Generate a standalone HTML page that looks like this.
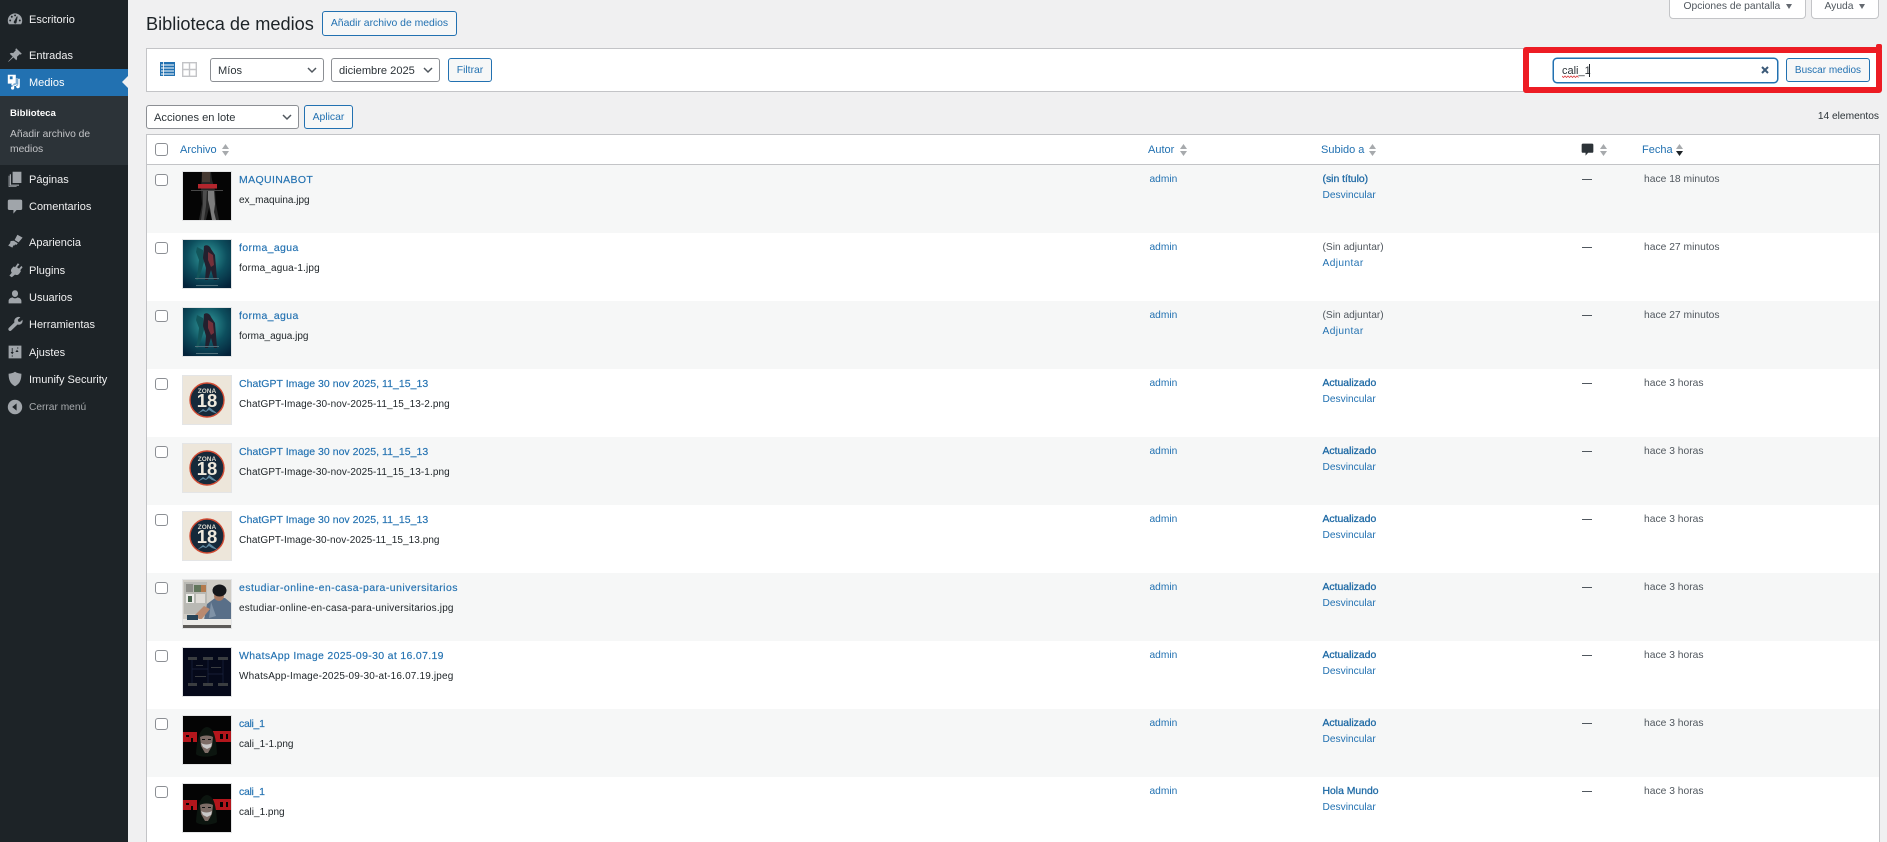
<!DOCTYPE html>
<html lang="es">
<head>
<meta charset="utf-8">
<title>Biblioteca de medios</title>
<style>
html,body{margin:0;padding:0;width:1887px;height:842px;overflow:hidden;background:#f0f0f1;font-family:"Liberation Sans",sans-serif;color:#2c3338}
#page{position:relative;width:1887px;height:842px;overflow:hidden;background:#f0f0f1}
.a,.t{position:absolute;white-space:nowrap}
.t{height:16px;line-height:16px}
.box{position:absolute;box-sizing:border-box}
#side{left:0;top:0;width:128px;height:842px;background:#1d2327}
.m{left:29px;font-size:11px;color:#f0f0f1}
.ic{position:absolute;left:7px;width:16px;height:16px;fill:#a0a5aa}
.btn{position:absolute;box-sizing:border-box;border:1px solid #2271b1;border-radius:3px;background:#f6f7f7;color:#2271b1;text-align:center;white-space:nowrap}
.sel{position:absolute;box-sizing:border-box;border:1px solid #8c8f94;border-radius:3px;background:#fff;color:#2c3338;font-size:11.1px;white-space:nowrap}
.sel span{position:absolute;left:7px;top:0;line-height:24px}
.sel svg{position:absolute;top:7px;right:6px;width:10px;height:8px}
.cb{position:absolute;left:155px;width:13px;height:13px;box-sizing:border-box;border:1px solid #8c8f94;border-radius:3px;background:#fff}
.row{position:absolute;left:147px;width:1732px;height:68px}
.odd{background:#f6f7f7}
.even{background:#fff}
.row .cb{left:8px;top:9px;height:12px}
.th{position:absolute;left:35px;top:6px;width:50px;height:50px;box-sizing:border-box;border:1px solid #e4e5e6;overflow:hidden}
.th svg{display:block;width:48px;height:48px}
.ti{left:92px;top:6.500px;font-size:10.5px;color:#2271b1;-webkit-text-stroke:.15px #2271b1}
.fn{left:92px;top:28px;font-size:10px;color:#1d2327}
.au{left:1002.5px;top:7px;font-size:10.2px;color:#2271b1}
.up{left:1175.5px;top:7px;font-size:10.2px;color:#50575e}
.upb{color:#1f6aa5;font-size:10.4px;-webkit-text-stroke:.3px #1f6aa5}
.ac{left:1175.5px;top:23px;font-size:10.2px;color:#2271b1}
.da{left:1435px;top:14px;width:10px;height:1px;background:#50575e}
.dt{left:1497px;top:7px;font-size:10.3px;color:#50575e}
.hd{font-size:11px;color:#2271b1;top:142px}
.sort{position:absolute;width:7px;height:12px}
</style>
</head>
<body>
<div id="page">
<svg width="0" height="0" style="position:absolute">
<defs>
<symbol id="sortg" viewBox="0 0 7 12"><path d="M3.5 0 7 5H0z" fill="#a7aaad"/><path d="M3.5 12 7 7H0z" fill="#a7aaad"/></symbol>
<symbol id="sortb" viewBox="0 0 7 12"><path d="M3.5 0 7 5H0z" fill="#a7aaad"/><path d="M3.5 12 7 7H0z" fill="#1d2327"/></symbol>
<symbol id="chev" viewBox="0 0 10 8"><path d="M1 2l4 4 4-4" fill="none" stroke="#50575e" stroke-width="1.5"/></symbol>
<symbol id="machina" viewBox="0 0 48 48"><rect width="48" height="48" fill="#050505"/><path d="M19 0h9l1 8 3 10 1 14 3 16H29l-3-12-3 12h-7l3-16-1-15z" fill="#262626"/><path d="M25 18h6l1 14-1 8 2 8h-4l-2-12-2-8z" fill="#7d7d7d"/><path d="M20 18h4l-1 16-2 14h-3l2-16z" fill="#4c4c4c"/><path d="M19 0h8v10h-8z" fill="#463a32"/><rect x="15" y="12" width="19" height="4.500" fill="#b3262d"/><rect x="8" y="18" width="32" height="1" fill="#484848"/></symbol>
<symbol id="agua" viewBox="0 0 48 48"><defs><radialGradient id="ag" cx=".5" cy=".35" r=".75"><stop offset="0" stop-color="#35a0a0"/><stop offset=".55" stop-color="#0d4f5e"/><stop offset="1" stop-color="#04233a"/></radialGradient></defs><rect width="48" height="48" fill="url(#ag)"/><path d="M14 7l6 3 1 12-3 10-3 8h-2l2-10 1-10-3-8z" fill="#12555a"/><path d="M21 6c3-2 6 0 7 3l4 6 1 12 1 13h-3l-3-10-3 10h-3l1-12-3-10z" fill="#23202e"/><path d="M25 12l5 3 1 10-3 2-3-7z" fill="#74303a"/><rect x="12" y="38" width="24" height="1" fill="#4e6f7a"/><rect x="13" y="45" width="22" height="1" fill="#4e6f7a"/></symbol>
<symbol id="zona" viewBox="0 0 48 48"><rect width="48" height="48" fill="#ede6da"/><circle cx="24" cy="24" r="17" fill="#16293a" stroke="#d04a32" stroke-width="1.400"/><text x="24" y="17" text-anchor="middle" font-family="Liberation Sans,sans-serif" font-size="6.500" font-weight="bold" fill="#d9d6cc">ZONA</text><text x="24" y="31" text-anchor="middle" font-family="Liberation Sans,sans-serif" font-size="18.500" font-weight="bold" fill="#efe9dd">18</text><path d="M14 38l6-5 3 2 3-4 9 7-6-2-3-2-3 2-3-1z" fill="#5f88a0"/></symbol>
<symbol id="study" viewBox="0 0 48 48"><rect width="48" height="48" fill="#d0cdc6"/><rect x="1" y="2" width="23" height="32" fill="#b9b9b4"/><rect x="3" y="4" width="7" height="8" fill="#8d8d88"/><rect x="11" y="5" width="9" height="7" fill="#62765c"/><rect x="18" y="5" width="5" height="7" fill="#b37a4d"/><rect x="3" y="14" width="8" height="9" fill="#edecea"/><rect x="5" y="16" width="4" height="6" fill="#45604a"/><rect x="13" y="14" width="9" height="9" fill="#dfdcd7"/><path d="M21 40l3-16 8-6 10 0 6 5v17z" fill="#596f88"/><path d="M28 22l5 14-7 2z" fill="#7f92a6"/><ellipse cx="36" cy="16" rx="5" ry="5" fill="#a97a62"/><ellipse cx="36.500" cy="10.500" rx="7" ry="6" fill="#15171b"/><path d="M11 36l10-10 6 3-9 11z" fill="#b98a70"/><rect y="39" width="48" height="6" fill="#ecebe8"/><rect x="4" y="35" width="11" height="5" fill="#274458"/><rect y="45" width="48" height="3" fill="#5c5a57"/></symbol>
<symbol id="whats" viewBox="0 0 48 48"><rect width="48" height="48" fill="#05091a"/><g fill="#3a3d40"><rect x="5" y="9" width="9" height="3"/><rect x="20" y="9" width="10" height="3"/><rect x="35" y="9" width="10" height="3"/><rect x="5" y="35" width="9" height="3"/><rect x="20" y="35" width="10" height="3"/><rect x="35" y="35" width="10" height="3"/><rect x="12" y="28" width="11" height="1"/><rect x="28" y="19" width="10" height="1"/><rect x="13" y="17" width="7" height="1"/></g><path d="M9 12v23M25 12v23M40 12v23M9 21h16M25 26h15" stroke="#1c2540" stroke-width=".7" fill="none"/></symbol>
<symbol id="cali" viewBox="0 0 48 48"><rect width="48" height="48" fill="#040404"/><path d="M0 16h14v10H0zM30 15h18v11H30z" fill="#b3161c"/><path d="M3 19h3v2H3zM8 22h2v4H8zM37 18h3v5h-3zM43 18h2v5h-2z" fill="#040404"/><path d="M13 38c1-16 4-26 11-27 7 1 9 10 10 27-3 3-18 4-21 0z" fill="#0c150f"/><path d="M17 21c3-2 10-2 13 0l-1 9-4 7h-3l-4-7z" fill="#7d6c66"/><path d="M18 27c3 2 8 2 11 0l-1 4-4 2-4-2z" fill="#c9c8c8"/><path d="M19 23h3v1h-3zM25 23h3v1h-3z" fill="#111"/></symbol>
</defs>
</svg>

<div id="side" class="box"></div>
<div class="box" style="left:0;top:69px;width:128px;height:27px;background:#2271b1"></div>
<div class="box" style="left:0;top:96px;width:128px;height:69px;background:#2c3338"></div>
<svg class="a" style="left:122px;top:76px" width="6" height="12"><path d="M6 0v12L0 6z" fill="#f0f0f1"/></svg>

<svg class="ic" style="top:11px" viewBox="0 0 20 20"><path d="M10 3C5 3 1 7 1 12c0 2 .6 3.4 1.4 4.5h15.2c.8-1.1 1.4-2.5 1.4-4.5 0-5-4-9-9-9zM4 13a1.2 1.2 0 110-2.4A1.2 1.2 0 014 13zm2-4.6a1.2 1.2 0 110-2.4 1.2 1.2 0 010 2.4zM9 6a1.2 1.2 0 112.2 0A1.2 1.2 0 019 6zm2.6 9.2a1.9 1.9 0 01-3.2-1.6l4-7 .9.4-1.4 7.6zM16 13a1.2 1.2 0 110-2.4 1.2 1.2 0 010 2.4z" fill-rule="evenodd"/></svg>
<div class="t m" style="top:12px">Escritorio</div>
<svg class="ic" style="top:47px;left:7px" viewBox="0 0 20 20"><path d="M11.5 1.5l7 7-1.5 1-1-.6-3.6 3.4c.5 1.8.2 3.2-.8 4.2L8 12.900 2 18.500 1.500 18l5.600-6-3.700-3.600c1-1 2.400-1.300 4.200-.8L11 4l-.6-1z"/></svg>
<div class="t m" style="top:48px">Entradas</div>
<svg class="ic" style="top:74px;fill:#fff" viewBox="0 0 20 20"><path d="M1 1h10v11H8.500l-1.500 2H5l1-2H1zm2.500 2v3.500h3.500V3zM7 15h6V5h-1v8l-5 .5zM14 6h2v9.500a2.300 2.300 0 11-2-2.200zM9 14v3.500a2 2 0 11-2-2z" fill-rule="evenodd"/></svg>
<div class="t m" style="top:75px;color:#fff">Medios</div>
<div class="t" style="left:10px;top:105.500px;font-size:9.600px;font-weight:bold;color:#fff">Biblioteca</div>
<div class="t" style="left:10px;top:127px;font-size:10.300px;color:#c3c4c7">Añadir archivo de</div>
<div class="t" style="left:10px;top:142px;font-size:10.300px;color:#c3c4c7">medios</div>

<svg class="ic" style="top:171px" viewBox="0 0 20 20"><path d="M7 1h11v14H7zM5 4v13h10v1.500H3.500V4zM2 6v14h10v-1H3V6z"/></svg>
<div class="t m" style="top:172px">Páginas</div>
<svg class="ic" style="top:198px" viewBox="0 0 20 20"><path d="M3 2h14a2 2 0 012 2v9a2 2 0 01-2 2h-5l-4 4.500V15H3a2 2 0 01-2-2V4a2 2 0 012-2z"/></svg>
<div class="t m" style="top:199px">Comentarios</div>
<svg class="ic" style="top:234px" viewBox="0 0 20 20"><path d="M13 1l6.500 3.500-5 6-5-3zM8.500 8.500l5 3-1.800 2.200-1.500-.7-1 1.500-1-.5-1.500 3-5.200-2.700 3-3.500-1-.5 1.500-1.500z"/></svg>
<div class="t m" style="top:235px">Apariencia</div>
<svg class="ic" style="top:262px" viewBox="0 0 20 20"><path d="M13.500 1.500l2 1.500-3 3.500 2.500 1.800 3-3.500 1.500 1.800-3 3.700 1 1-2 3c-1.500 2-3.500 2.300-5.500 1.500L6 19 3 17l3-3.500C4.800 12 4.500 10 6 8l2.500-2.500 1.500 1z"/></svg>
<div class="t m" style="top:263px">Plugins</div>
<svg class="ic" style="top:289px" viewBox="0 0 20 20"><path d="M10 1.500c2.300 0 3.800 1.800 3.800 4.200S12.300 10 10 10 6.200 8 6.200 5.700 7.700 1.500 10 1.500zM6.800 10.500c1 .8 2 1.200 3.200 1.200s2.300-.4 3.200-1.200c2.600.5 4.800 2 4.800 4.500V18H2v-3c0-2.500 2.200-4 4.800-4.500z"/></svg>
<div class="t m" style="top:290px">Usuarios</div>
<svg class="ic" style="top:316px" viewBox="0 0 20 20"><path d="M13.500 1.200c1.300-.2 2.300 0 3.200.5l-3.200 2.800.5 2.300 2.300.7 3-2.800c.5 2 0 3.800-1.300 5-1.400 1.200-3 1.500-4.800 1L5.500 18c-1 1-2.300 1-3.200.1-.9-1-.9-2.200 0-3.200l7-7c-.5-1.700-.2-3.400 1-4.700.8-1 1.800-1.700 3.200-2z"/></svg>
<div class="t m" style="top:317px">Herramientas</div>
<svg class="ic" style="top:344px" viewBox="0 0 20 20"><path d="M2 2h16v16H2zM6 5v5H4.500l2 3 2-3H7V5zm7 10v-5h1.500l-2-3-2 3H13v5zM6 14v2h1v-2zm7-10v2h1V4z" fill-rule="evenodd"/></svg>
<div class="t m" style="top:345px">Ajustes</div>
<svg class="ic" style="top:371px" viewBox="0 0 20 20"><path d="M10 1c2.500 1.600 5 2.300 8 2.500 0 6-1 12-8 15.500C3 15.500 2 9.500 2 3.500 5 3.300 7.500 2.600 10 1z"/></svg>
<div class="t m" style="top:372px">Imunify Security</div>
<svg class="ic" style="top:399px" viewBox="0 0 20 20"><path d="M10 1a9 9 0 110 18 9 9 0 010-18zm2 4.500L6.500 10l5.500 4.500z" fill-rule="evenodd"/></svg>
<div class="t" style="left:29px;top:400px;font-size:10.200px;color:#a7aaad">Cerrar menú</div>

<!-- Top tabs -->
<div class="box" style="left:1669px;top:-2px;width:137px;height:21px;background:#fff;border:1px solid #c3c4c7;border-radius:0 0 4px 4px"></div>
<div class="t" style="left:1683.500px;top:-1px;font-size:10.300px;color:#50575e">Opciones de pantalla</div>
<svg class="a" style="left:1786px;top:4px" width="6" height="5"><path d="M0 0h6L3 5z" fill="#646970"/></svg>
<div class="box" style="left:1811px;top:-2px;width:68px;height:21px;background:#fff;border:1px solid #c3c4c7;border-radius:0 0 4px 4px"></div>
<div class="t" style="left:1824.500px;top:-1px;font-size:10.300px;color:#50575e">Ayuda</div>
<svg class="a" style="left:1859px;top:4px" width="6" height="5"><path d="M0 0h6L3 5z" fill="#646970"/></svg>

<!-- Title -->
<div class="a" style="left:146px;top:12px;height:24px;line-height:24px;font-size:18.200px;color:#1d2327">Biblioteca de medios</div>
<div class="btn" style="left:322px;top:11px;width:135px;height:25px;font-size:10.400px;line-height:24px">Añadir archivo de medios</div>

<!-- Filter bar -->
<div class="box" style="left:146px;top:48px;width:1734px;height:44px;background:#fff;border:1px solid #c3c4c7"></div>
<svg class="a" style="left:160px;top:62px" width="15" height="14"><path d="M0 0h15v14H0z" fill="#2271b1"/><path d="M1 3h13M1 6h13M1 9h13M1 12h13" stroke="#fff" stroke-width="1"/><path d="M3.500 0v14" stroke="#fff" stroke-width=".8"/></svg>
<svg class="a" style="left:182px;top:62px" width="15" height="15"><rect x=".7" y=".7" width="13.600" height="13.600" fill="#fff" stroke="#c3c4c7" stroke-width="1.400"/><path d="M7.500 0v15M0 7.500h15" stroke="#c3c4c7" stroke-width="1.400"/></svg>
<div class="sel" style="left:210px;top:58px;width:114px;height:24px"><span>Míos</span><svg><use href="#chev"/></svg></div>
<div class="sel" style="left:331px;top:58px;width:109px;height:24px"><span>diciembre 2025</span><svg><use href="#chev"/></svg></div>
<div class="btn" style="left:448px;top:58px;width:44px;height:24px;font-size:10.400px;line-height:24px">Filtrar</div>

<div class="box" style="left:1553px;top:57.500px;width:225px;height:25px;background:#fff;border:1px solid #2271b1;border-radius:4px;box-shadow:0 0 0 .5px #2271b1"></div>
<div class="t" style="left:1562px;top:63px;font-size:11px;color:#2c3338">cali_1</div>
<div class="a" style="left:1588.500px;top:64px;width:1px;height:13px;background:#1d2327"></div>
<svg class="a" style="left:1562px;top:75px" width="17" height="3"><path d="M0 1l1.500 1.500L3 1l1.500 1.500L6 1l1.500 1.500L9 1l1.500 1.500L12 1l1.500 1.500L15 1l1.500 1.500" fill="none" stroke="#d9363a" stroke-width=".8"/></svg>
<svg class="a" style="left:1761px;top:66px" width="8" height="8"><path d="M1 1l6 6M7 1L1 7" stroke="#3c5a78" stroke-width="2"/></svg>
<div class="btn" style="left:1786px;top:58px;width:84px;height:24px;font-size:10px;line-height:24px;color:#2271b1">Buscar medios</div>

<!-- Red annotation -->
<div class="box" style="left:1523px;top:46.500px;width:359px;height:46px;border:6px solid #ed1c24;border-radius:3px"></div>
<div class="box" style="left:1876px;top:44px;width:6px;height:6px;background:#ed1c24;border-radius:2px"></div>

<!-- Bulk -->
<div class="sel" style="left:146px;top:105px;width:153px;height:24px"><span>Acciones en lote</span><svg><use href="#chev"/></svg></div>
<div class="btn" style="left:304px;top:105px;width:49px;height:24px;font-size:10.400px;line-height:24px">Aplicar</div>
<div class="t" style="right:8px;top:109px;font-size:10.200px;color:#2c3338">14 elementos</div>

<!-- Table -->
<div class="box" style="left:146px;top:134px;width:1734px;height:720px;background:#fff;border:1px solid #c3c4c7"></div>
<div class="box" style="left:147px;top:164px;width:1732px;height:1px;background:#c3c4c7"></div>
<div class="cb" style="top:143px"></div>
<div class="t hd" style="left:180px">Archivo</div>
<svg class="sort" style="left:222px;top:144px"><use href="#sortg"/></svg>
<div class="t hd" style="left:1148px">Autor</div>
<svg class="sort" style="left:1180px;top:144px"><use href="#sortg"/></svg>
<div class="t hd" style="left:1321px">Subido a</div>
<svg class="sort" style="left:1369px;top:144px"><use href="#sortg"/></svg>
<svg class="a" style="left:1581px;top:143px" width="13" height="13" viewBox="0 0 20 20"><path d="M3 1h14a2 2 0 012 2v10a2 2 0 01-2 2h-6l-4 4.500V15H3a2 2 0 01-2-2V3a2 2 0 012-2z" fill="#2c3338"/></svg>
<svg class="sort" style="left:1600px;top:144px"><use href="#sortg"/></svg>
<div class="t hd" style="left:1642px">Fecha</div>
<svg class="sort" style="left:1676px;top:144px"><use href="#sortb"/></svg>

<div class="row odd" style="top:165px"><div class="cb"></div><div class="th"><svg><use href="#machina"/></svg></div><div class="t ti" style="letter-spacing:.36px">MAQUINABOT</div><div class="t fn">ex_maquina.jpg</div><div class="t au">admin</div><div class="t up upb">(sin título)</div><div class="t ac">Desvincular</div><div class="a da"></div><div class="t dt">hace 18 minutos</div></div>

<div class="row even" style="top:233px"><div class="cb"></div><div class="th"><svg><use href="#agua"/></svg></div><div class="t ti" style="letter-spacing:.36px">forma_agua</div><div class="t fn" style="letter-spacing:.15px">forma_agua-1.jpg</div><div class="t au">admin</div><div class="t up">(Sin adjuntar)</div><div class="t ac" style="letter-spacing:.4px">Adjuntar</div><div class="a da"></div><div class="t dt">hace 27 minutos</div></div>

<div class="row odd" style="top:301px"><div class="cb"></div><div class="th"><svg><use href="#agua"/></svg></div><div class="t ti" style="letter-spacing:.36px">forma_agua</div><div class="t fn">forma_agua.jpg</div><div class="t au">admin</div><div class="t up">(Sin adjuntar)</div><div class="t ac" style="letter-spacing:.4px">Adjuntar</div><div class="a da"></div><div class="t dt">hace 27 minutos</div></div>

<div class="row even" style="top:369px"><div class="cb"></div><div class="th"><svg><use href="#zona"/></svg></div><div class="t ti" style="letter-spacing:.03px">ChatGPT Image 30 nov 2025, 11_15_13</div><div class="t fn" style="letter-spacing:.09px">ChatGPT-Image-30-nov-2025-11_15_13-2.png</div><div class="t au">admin</div><div class="t up upb">Actualizado</div><div class="t ac">Desvincular</div><div class="a da"></div><div class="t dt">hace 3 horas</div></div>

<div class="row odd" style="top:437px"><div class="cb"></div><div class="th"><svg><use href="#zona"/></svg></div><div class="t ti" style="letter-spacing:.03px">ChatGPT Image 30 nov 2025, 11_15_13</div><div class="t fn" style="letter-spacing:.09px">ChatGPT-Image-30-nov-2025-11_15_13-1.png</div><div class="t au">admin</div><div class="t up upb">Actualizado</div><div class="t ac">Desvincular</div><div class="a da"></div><div class="t dt">hace 3 horas</div></div>

<div class="row even" style="top:505px"><div class="cb"></div><div class="th"><svg><use href="#zona"/></svg></div><div class="t ti" style="letter-spacing:.03px">ChatGPT Image 30 nov 2025, 11_15_13</div><div class="t fn" style="letter-spacing:.06px">ChatGPT-Image-30-nov-2025-11_15_13.png</div><div class="t au">admin</div><div class="t up upb">Actualizado</div><div class="t ac">Desvincular</div><div class="a da"></div><div class="t dt">hace 3 horas</div></div>

<div class="row odd" style="top:573px"><div class="cb"></div><div class="th"><svg><use href="#study"/></svg></div><div class="t ti" style="letter-spacing:.45px">estudiar-online-en-casa-para-universitarios</div><div class="t fn" style="letter-spacing:.18px">estudiar-online-en-casa-para-universitarios.jpg</div><div class="t au">admin</div><div class="t up upb">Actualizado</div><div class="t ac">Desvincular</div><div class="a da"></div><div class="t dt">hace 3 horas</div></div>

<div class="row even" style="top:641px"><div class="cb"></div><div class="th"><svg><use href="#whats"/></svg></div><div class="t ti" style="letter-spacing:.33px">WhatsApp Image 2025-09-30 at 16.07.19</div><div class="t fn" style="letter-spacing:.17px">WhatsApp-Image-2025-09-30-at-16.07.19.jpeg</div><div class="t au">admin</div><div class="t up upb">Actualizado</div><div class="t ac">Desvincular</div><div class="a da"></div><div class="t dt">hace 3 horas</div></div>

<div class="row odd" style="top:709px"><div class="cb"></div><div class="th"><svg><use href="#cali"/></svg></div><div class="t ti" style="letter-spacing:-.3px">cali_1</div><div class="t fn">cali_1-1.png</div><div class="t au">admin</div><div class="t up upb">Actualizado</div><div class="t ac">Desvincular</div><div class="a da"></div><div class="t dt">hace 3 horas</div></div>

<div class="row even" style="top:777px"><div class="cb"></div><div class="th"><svg><use href="#cali"/></svg></div><div class="t ti" style="letter-spacing:-.3px">cali_1</div><div class="t fn">cali_1.png</div><div class="t au">admin</div><div class="t up upb">Hola Mundo</div><div class="t ac">Desvincular</div><div class="a da"></div><div class="t dt">hace 3 horas</div></div>
</div>
</body>
</html>
